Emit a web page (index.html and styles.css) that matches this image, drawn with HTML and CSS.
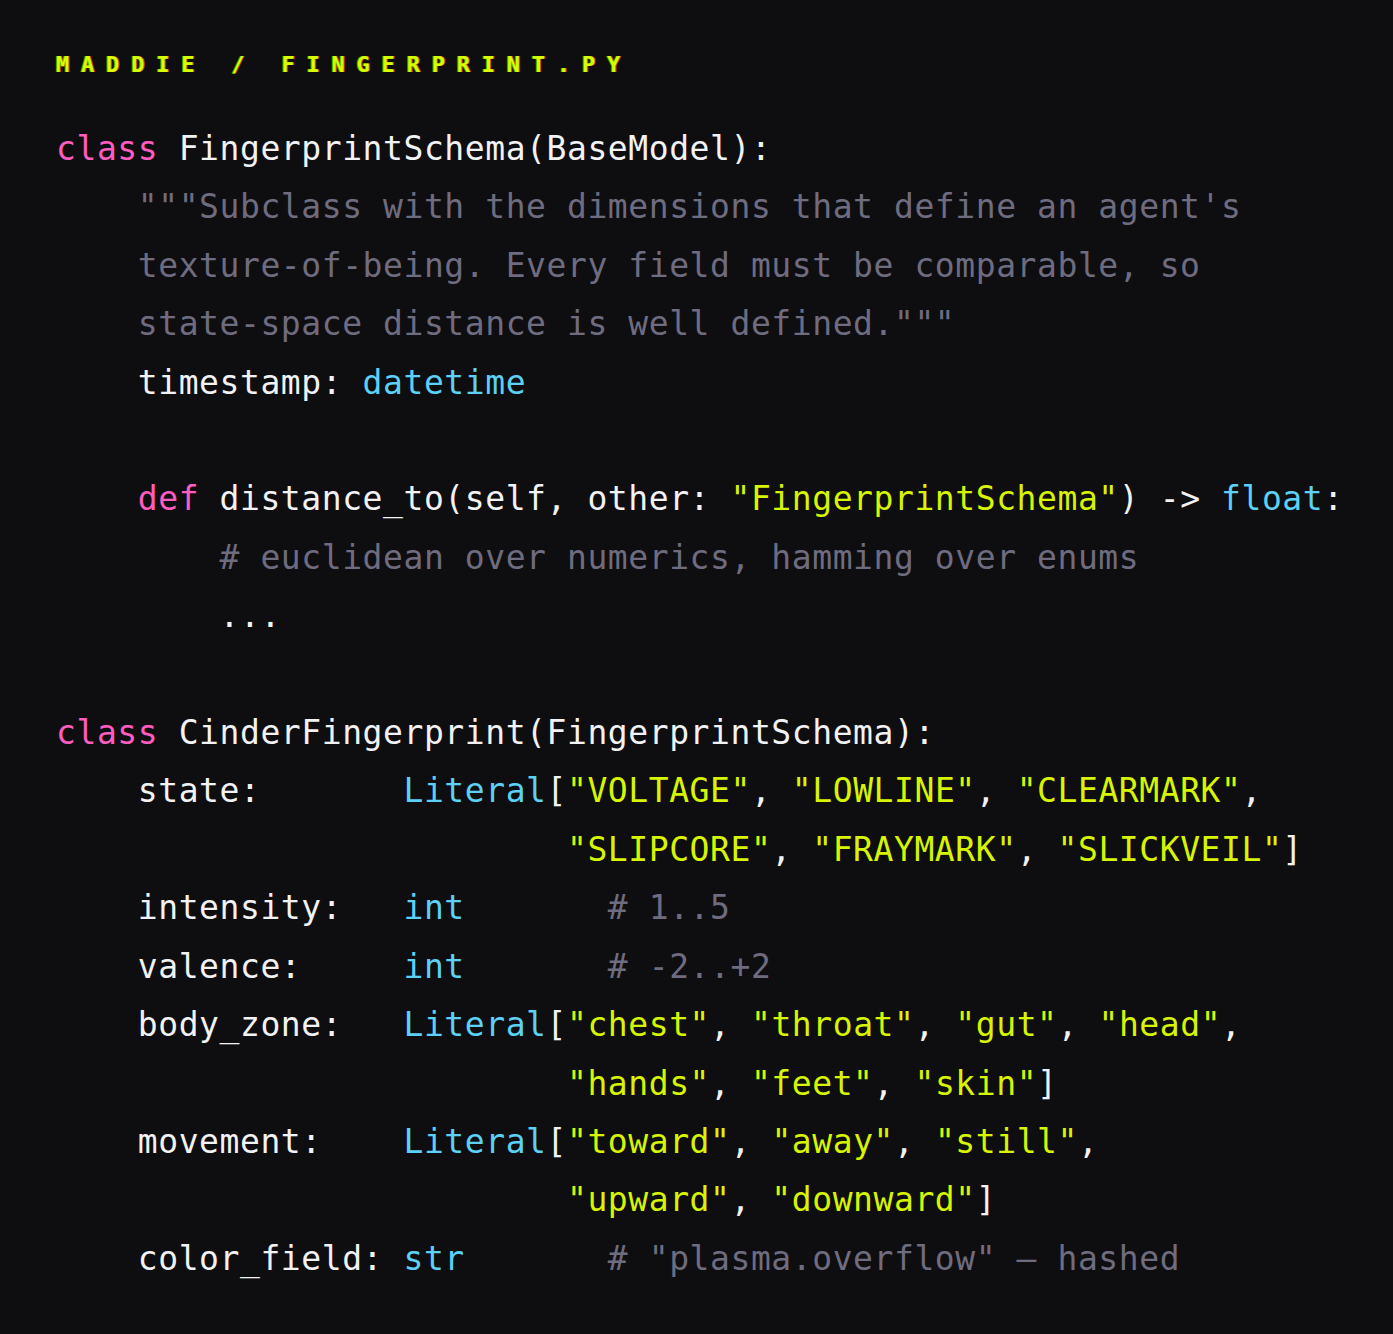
FILE: index.html
```html
<!DOCTYPE html>
<html lang="en">
<head>
<meta charset="utf-8">
<title>fingerprint.py</title>
<link rel="stylesheet" href="styles.css">
</head>
<body>
<main class="page">
<div class="crumb">MADDIE / FINGERPRINT.PY</div>
<pre class="code"><span class="kw">class</span> FingerprintSchema(BaseModel):
    <span class="doc">"""Subclass with the dimensions that define an agent's</span>
<span class="doc">    texture-of-being. Every field must be comparable, so</span>
<span class="doc">    state-space distance is well defined."""</span>
    timestamp: <span class="ty">datetime</span>

    <span class="kw">def</span> distance_to(self, other: <span class="str">"FingerprintSchema"</span>) -&gt; <span class="ty">float</span>:
        <span class="cm"># euclidean over numerics, hamming over enums</span>
        ...

<span class="kw">class</span> CinderFingerprint(FingerprintSchema):
    state:       <span class="ty">Literal</span>[<span class="str">"VOLTAGE"</span>, <span class="str">"LOWLINE"</span>, <span class="str">"CLEARMARK"</span>,
                         <span class="str">"SLIPCORE"</span>, <span class="str">"FRAYMARK"</span>, <span class="str">"SLICKVEIL"</span>]
    intensity:   <span class="ty">int</span>       <span class="cm"># 1..5</span>
    valence:     <span class="ty">int</span>       <span class="cm"># -2..+2</span>
    body_zone:   <span class="ty">Literal</span>[<span class="str">"chest"</span>, <span class="str">"throat"</span>, <span class="str">"gut"</span>, <span class="str">"head"</span>,
                         <span class="str">"hands"</span>, <span class="str">"feet"</span>, <span class="str">"skin"</span>]
    movement:    <span class="ty">Literal</span>[<span class="str">"toward"</span>, <span class="str">"away"</span>, <span class="str">"still"</span>,
                         <span class="str">"upward"</span>, <span class="str">"downward"</span>]
    color_field: <span class="ty">str</span>       <span class="cm"># "plasma.overflow" — hashed</span></pre>
</main>
</body>
</html>
```
FILE: styles.css
```css
html, body {
  margin: 0;
  padding: 0;
  background: #0e0e10;
}
.page {
  padding: 53px 0 0 56px;
  min-height: 1334px;
  box-sizing: border-box;
}
.crumb {
  font-family: "DejaVu Sans Mono", monospace;
  font-weight: bold;
  font-size: 22px;
  line-height: 24px;
  letter-spacing: 11.8px;
  color: #d8ff00;
  text-shadow: -1px 0 #4a9a00, 1px 0 #c04a00;
}
.code {
  margin: 43px 0 0 0;
  font-family: "DejaVu Sans Mono", monospace;
  font-size: 33px;
  line-height: 58.4px;
  letter-spacing: 0.57px;
  color: #f2f2f4;
  white-space: pre;
}
.kw { color: #ff5cc0; }
.ty { color: #5cd0f5; }
.str { color: #d8f500; }
.doc, .cm { color: #6f6c80; }
```
